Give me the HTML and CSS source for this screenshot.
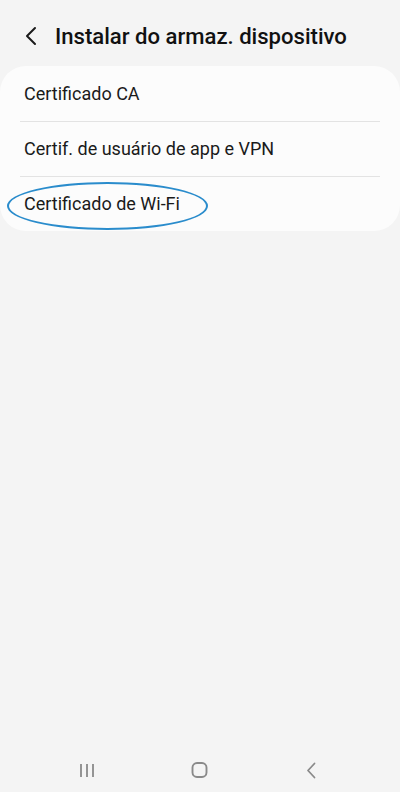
FILE: index.html
```html
<!DOCTYPE html>
<html lang="pt">
<head>
<meta charset="utf-8">
<link rel="stylesheet" href="styles.css">
</head>
<body>
<div class="screen">
  <header class="topbar">
    <svg class="back" width="14" height="20" viewBox="0 0 14 20"><path d="M11 2 L3 10 L11 18" fill="none" stroke="#1a1a1a" stroke-width="2" stroke-linecap="round" stroke-linejoin="round"/></svg>
    <h1 class="title">Instalar do armaz. dispositivo</h1>
  </header>
  <div class="card">
    <div class="row">Certificado CA</div>
    <div class="row">Certif. de usuário de app e VPN</div>
    <div class="row marked">Certificado de Wi-Fi<span class="ring"></span></div>
  </div>
  <div class="spacer"></div>
  <nav class="navbar">
    <span class="navitem"><svg width="16" height="15" viewBox="0 0 16 15"><path d="M2 1v13M8 1v13M14 1v13" stroke="#8a8a8a" stroke-width="1.8" fill="none"/></svg></span>
    <span class="navitem"><svg width="17" height="16" viewBox="0 0 17 16"><rect x="1.5" y="1" width="14" height="14" rx="4.5" stroke="#8a8a8a" stroke-width="1.9" fill="none"/></svg></span>
    <span class="navitem"><svg width="12" height="17" viewBox="0 0 12 17"><path d="M9.5 1.5 L3 8.5 L9.5 15.5" stroke="#8a8a8a" stroke-width="1.8" fill="none" stroke-linecap="round" stroke-linejoin="round"/></svg></span>
  </nav>
</div>
</body>
</html>
```
FILE: styles.css
```css
* { box-sizing: border-box; }
html, body { margin: 0; padding: 0; }
body {
  background: #f4f4f4;
  font-family: Roboto, "Noto Sans", "Liberation Sans", sans-serif;
  color: #111;
}
.screen {
  width: 400px;
  height: 792px;
  display: flex;
  flex-direction: column;
}
.topbar {
  display: flex;
  align-items: center;
  height: 66px;
  padding: 6px 0 0 24px;
}
.back { flex: none; margin-right: 17px; }
.title {
  margin: 0;
  font-size: 22.1px;
  font-weight: 500;
  color: #111;
}
.card {
  background: #fcfcfc;
  border-radius: 26px;
}
.row {
  position: relative;
  height: 55px;
  display: flex;
  align-items: center;
  padding-left: 24px;
  font-size: 18px;
  color: #1a1a1a;
}
.row + .row::before {
  content: "";
  position: absolute;
  left: 20px;
  right: 20px;
  top: 0;
  border-top: 1px solid #e3e3e3;
}
.ring {
  position: absolute;
  left: 7px;
  top: 6px;
  width: 201px;
  height: 48px;
  border: 2px solid #2a8ccc;
  border-radius: 50%;
}
.spacer { flex: 1; }
.navbar {
  height: 44px;
  display: flex;
  align-items: center;
  padding-left: 31px;
}
.navitem {
  width: 112px;
  display: flex;
  justify-content: center;
  align-items: center;
}
```
